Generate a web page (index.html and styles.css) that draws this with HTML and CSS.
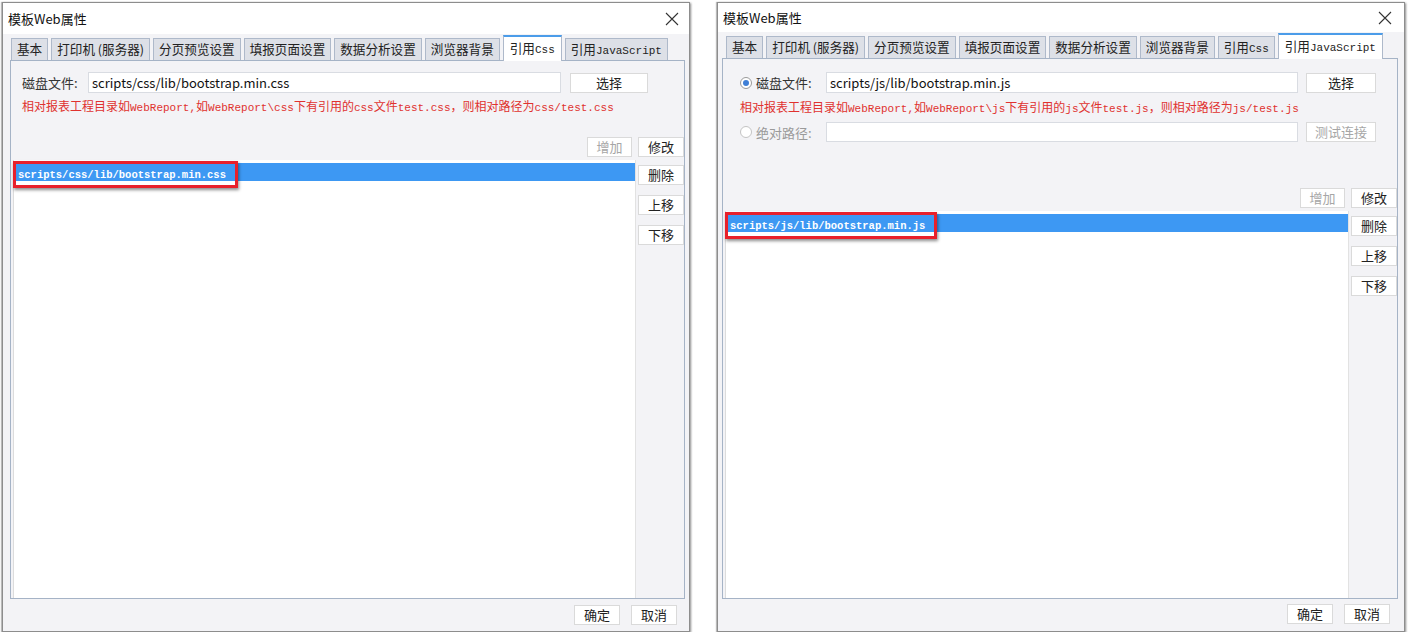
FILE: index.html
```html
<!DOCTYPE html>
<html lang="zh">
<head>
<meta charset="utf-8">
<title>模板Web属性</title>
<link rel="stylesheet" href="styles.css">
</head>
<body>
<div class="page">
  <div class="dialog dlg-css">
    <div class="titlebar">
      <span class="title">模板Web属性</span>
      <svg class="close" width="14" height="14" viewBox="0 0 14 14"><path d="M1 1L13 13M13 1L1 13" stroke="#333" stroke-width="1.1" fill="none"/></svg>
    </div>
    <div class="tabs">
      <div class="tab">基本</div>
      <div class="tab">打印机 (服务器)</div>
      <div class="tab">分页预览设置</div>
      <div class="tab">填报页面设置</div>
      <div class="tab">数据分析设置</div>
      <div class="tab">浏览器背景</div>
      <div class="tab active">引用<span class="mono">Css</span></div>
      <div class="tab">引用<span class="mono">JavaScript</span></div>
    </div>
    <div class="panel">
      <div class="file-row">
        <span class="label">磁盘文件:</span>
        <div class="input">scripts/css/lib/bootstrap.min.css</div>
        <div class="btn choose">选择</div>
      </div>
      <div class="hint">相对报表工程目录如<span class="m">WebReport,</span>如<span class="m">WebReport\css</span>下有引用的<span class="m">css</span>文件<span class="m">test.css</span>，则相对路径为<span class="m">css/test.css</span></div>
      <div class="top-btns">
        <div class="btn disabled">增加</div>
        <div class="btn">修改</div>
      </div>
      <div class="list-row">
        <div class="list">
          <div class="item"><span class="hl">scripts/css/lib/bootstrap.min.css</span></div>
        </div>
        <div class="side-btns">
          <div class="btn">删除</div>
          <div class="btn">上移</div>
          <div class="btn">下移</div>
        </div>
      </div>
    </div>
    <div class="footer">
      <div class="btn">确定</div>
      <div class="btn">取消</div>
    </div>
  </div>

  <div class="dialog dlg-js">
    <div class="titlebar">
      <span class="title">模板Web属性</span>
      <svg class="close" width="14" height="14" viewBox="0 0 14 14"><path d="M1 1L13 13M13 1L1 13" stroke="#333" stroke-width="1.1" fill="none"/></svg>
    </div>
    <div class="tabs">
      <div class="tab">基本</div>
      <div class="tab">打印机 (服务器)</div>
      <div class="tab">分页预览设置</div>
      <div class="tab">填报页面设置</div>
      <div class="tab">数据分析设置</div>
      <div class="tab">浏览器背景</div>
      <div class="tab">引用<span class="mono">Css</span></div>
      <div class="tab active">引用<span class="mono">JavaScript</span></div>
    </div>
    <div class="panel">
      <div class="file-row">
        <span class="label radio-label"><span class="radio checked"></span>磁盘文件:</span>
        <div class="input">scripts/js/lib/bootstrap.min.js</div>
        <div class="btn choose">选择</div>
      </div>
      <div class="hint">相对报表工程目录如<span class="m">WebReport,</span>如<span class="m">WebReport\js</span>下有引用的<span class="m">js</span>文件<span class="m">test.js</span>，则相对路径为<span class="m">js/test.js</span></div>
      <div class="file-row second">
        <span class="label radio-label off"><span class="radio"></span>绝对路径:</span>
        <div class="input"></div>
        <div class="btn choose disabled">测试连接</div>
      </div>
      <div class="top-btns">
        <div class="btn disabled">增加</div>
        <div class="btn">修改</div>
      </div>
      <div class="list-row">
        <div class="list">
          <div class="item"><span class="hl">scripts/js/lib/bootstrap.min.js</span></div>
        </div>
        <div class="side-btns">
          <div class="btn">删除</div>
          <div class="btn">上移</div>
          <div class="btn">下移</div>
        </div>
      </div>
    </div>
    <div class="footer">
      <div class="btn">确定</div>
      <div class="btn">取消</div>
    </div>
  </div>
</div>
</body>
</html>
```

FILE: styles.css
```css
* { box-sizing: border-box; }
html, body { margin: 0; padding: 0; background: #fff; }
body {
  font-family: "Noto Sans CJK SC", "Noto Sans", sans-serif;
  font-size: 13px;
  color: #222;
}
.page {
  display: flex;
  gap: 27px;
  padding: 2px 0 0 2px;
}
.dialog {
  width: 688px;
  height: 630px;
  background: #f3f3f6;
  border: 1px solid #8d8d8d;
  box-shadow: 1px 1px 2px rgba(0,0,0,0.45), -1px 0 1px rgba(0,0,0,0.25);
  display: flex;
  flex-direction: column;
}
.titlebar {
  height: 31px;
  background: #fff;
  display: flex;
  align-items: center;
  justify-content: space-between;
  padding: 0 10px 0 5px;
  flex: none;
}
.title { font-size: 13px; color: #111; }
.close { display: block; }
.dlg-js .titlebar { height: 29px; padding-right: 12px; }

.tabs {
  height: 26px;
  display: flex;
  align-items: flex-end;
  gap: 3px;
  padding-left: 8px;
  flex: none;
  position: relative;
  z-index: 1;
}
.tab {
  height: 22px;
  line-height: 20px;
  padding: 0 5px;
  background: #dde0e7;
  border: 1px solid #aeb9ca;
  border-bottom: none;
  color: #222;
  font-size: 12.6px;
  white-space: nowrap;
}
.tab.active {
  height: 26px;
  line-height: 22px;
  background: #fff;
  border-top: 2px solid #4b9ce9;
  padding: 0 6px;
  margin-bottom: -1px;
}
.mono { font-family: "Liberation Mono", monospace; font-size: 11px; }

.panel {
  flex: 1;
  margin: 0 4px 0 7px;
  border: 1px solid #a5b3c6;
  display: flex;
  flex-direction: column;
  padding-top: 11px;
  min-height: 0;
}
.dlg-js .panel { margin: 0 6px 0 4px; padding-top: 13px; }

.file-row {
  display: flex;
  align-items: center;
  height: 21px;
}
.label {
  width: 77px;
  padding-left: 11px;
  color: #333;
  white-space: nowrap;
}
.radio-label {
  width: 103px;
  padding-left: 17px;
  display: flex;
  align-items: center;
  gap: 4px;
}
.radio-label.off { color: #9a9a9a; }
.radio {
  width: 12px;
  height: 12px;
  border-radius: 50%;
  border: 1px solid #9a9a9a;
  background: #fff;
  position: relative;
  flex: none;
}
.radio-label.off .radio { border-color: #c4c4c4; }
.radio.checked::after {
  content: "";
  position: absolute;
  left: 2px; top: 2px;
  width: 6px; height: 6px;
  border-radius: 50%;
  background: #3f7fd6;
}
.input {
  width: 473px;
  height: 21px;
  background: #fff;
  border: 1px solid #d9dce2;
  line-height: 19px;
  padding-left: 3px;
  font-size: 13px;
  color: #111;
  white-space: nowrap;
}
.dlg-js .input { width: 472px; }
.second { margin-top: 7px; height: 20px; }
.second .input { height: 20px; }

.btn {
  height: 20px;
  line-height: 18px;
  background: #fff;
  border: 1px solid #dadada;
  text-align: center;
  color: #222;
  font-size: 13px;
  white-space: nowrap;
}
.btn.disabled { color: #a6a6a6; }
.choose { width: 78px; margin-left: 9px; }
.dlg-js .choose { width: 70px; margin-left: 8px; }

.hint {
  margin-top: 5px;
  padding-left: 11px;
  height: 16px;
  line-height: 16px;
  font-size: 12px;
  color: #e0322f;
  white-space: nowrap;
}
.dlg-js .hint { padding-left: 17px; margin-top: 6px; }
.m { font-family: "Liberation Mono", monospace; font-size: 11px; }

.top-btns {
  display: flex;
  justify-content: flex-end;
  gap: 6px;
  margin-top: 23px;
}
.dlg-js .top-btns { margin-top: 46px; }
.top-btns .btn { width: 46px; }
.top-btns .btn.disabled { width: 45px; }

.list-row {
  flex: 1;
  display: flex;
  margin-top: 3px;
  min-height: 0;
}
.list {
  flex: 1;
  margin-left: 2px;
  background: #fff;
  border-left: 1px solid #dcdcdc;
  border-right: 1px solid #e2e2e2;
  padding-top: 3px;
}
.item {
  height: 18px;
  background: #3d98f3;
  position: relative;
  padding-left: 4px;
}
.hl {
  display: inline-block;
  font-family: "Liberation Mono", monospace;
  font-weight: bold;
  font-size: 10.5px;
  line-height: 18px;
  color: #fff;
  position: relative;
}
.hl::before {
  content: "";
  position: absolute;
  left: -5px;
  right: -12px;
  top: -5px;
  bottom: -4px;
  border: 3px solid #e8202b;
  box-shadow: 1px 2px 3px rgba(0,0,0,0.45);
}
.side-btns {
  width: 48px;
  flex: none;
  display: flex;
  flex-direction: column;
  align-items: flex-end;
  gap: 10px;
  padding-top: 5px;
}
.side-btns .btn { width: 46px; }

.footer {
  height: 32px;
  flex: none;
  display: flex;
  justify-content: flex-end;
  gap: 11px;
  padding: 6px 12px 0 0;
}
.footer .btn { width: 46px; }
.dlg-js .footer { padding-right: 14px; padding-top: 5px; }
```
